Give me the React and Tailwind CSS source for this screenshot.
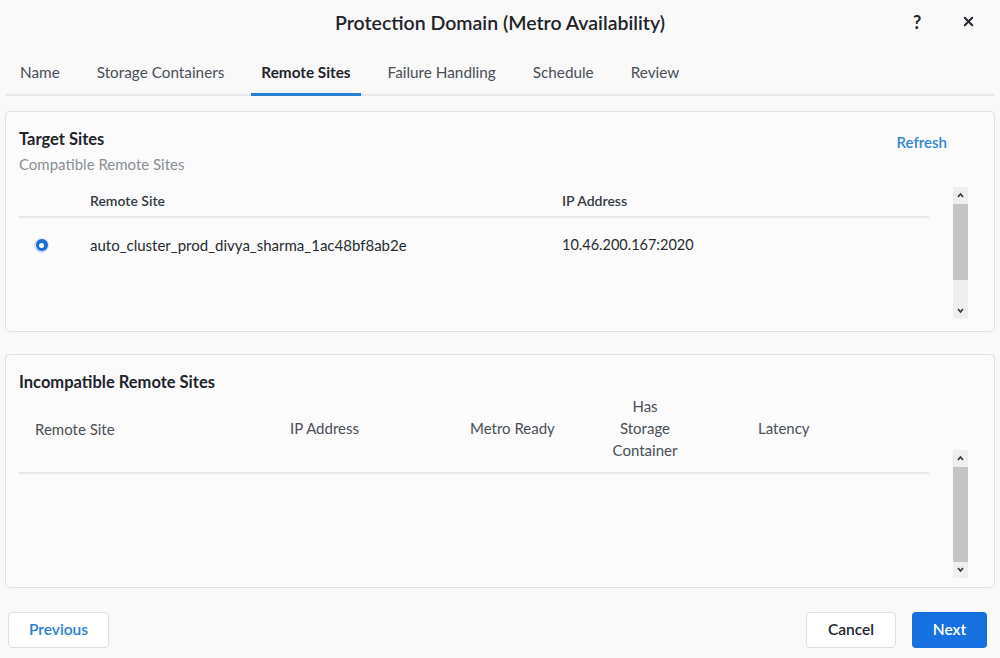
import { X } from "lucide-react";

const tabs = [
  "Name",
  "Storage Containers",
  "Remote Sites",
  "Failure Handling",
  "Schedule",
  "Review",
];

function Scrollbar({ className, thumbClass }) {
  return (
    <div className={`flex w-[15px] flex-col items-center bg-[#efefef] ${className}`}>
      <svg width="9" height="16" viewBox="0 0 9 16" className="shrink-0">
        <path d="M2 10 L4.5 7 L7 10" stroke="#333" strokeWidth="1.6" fill="none" />
      </svg>
      <div className={`w-full bg-[#c4c4c4] ${thumbClass}`} />
      <div className="flex-1" />
      <svg width="9" height="16" viewBox="0 0 9 16" className="shrink-0">
        <path d="M2 6 L4.5 9 L7 6" stroke="#333" strokeWidth="1.6" fill="none" />
      </svg>
    </div>
  );
}

export default function App() {
  return (
    <div
      className="flex h-[658px] w-[1000px] flex-col bg-[#f9f9f9] text-[#22272e]"
      style={{ fontFamily: "Lato, 'Noto Sans', sans-serif" }}
    >
      {/* header */}
      <div className="relative flex h-[46px] items-center justify-center">
        <h1 className="text-[19.5px] font-semibold text-[#1f242b]">
          Protection Domain (Metro Availability)
        </h1>
        <span className="absolute left-[913px] top-[9px] text-[18px] font-bold">?</span>
        <X className="absolute left-[961px] top-[14px]" size={15} strokeWidth={3} />
      </div>

      {/* tabs */}
      <div className="mx-[5px] flex h-[50px] items-stretch gap-[17px] border-b-2 border-[#e6e8eb] pl-[5px]">
        {tabs.map((t) => (
          <div
            key={t}
            className={`-mb-[2px] flex items-center px-[10px] pt-[6px] text-[15.3px] ${
              t === "Remote Sites"
                ? "border-b-[3px] border-[#2a7ed6] font-bold text-[#1f242b]"
                : "border-b-[3px] border-transparent text-[#4a4f57]"
            }`}
          >
            {t}
          </div>
        ))}
      </div>

      {/* target sites */}
      <div className="mx-[5px] mt-[15px] flex h-[221px] flex-col rounded-[4px] border border-[#dfe1e4] bg-[#fbfbfb] pl-[13px] pr-[26px]">
        <div className="flex items-start justify-between pt-[16px]">
          <div>
            <div className="text-[16.5px] font-bold leading-[22px] text-[#1f242b]">Target Sites</div>
            <div className="mt-[4px] text-[15px] leading-[20px] text-[#8a8f96]">
              Compatible Remote Sites
            </div>
          </div>
          <button className="mr-[21px] mt-[3px] text-[15px] font-semibold text-[#2e86d6]">
            Refresh
          </button>
        </div>
        <div className="mt-[13px] flex flex-1 pb-[9px]">
          <div className="mr-[24px] flex-1">
            <div className="flex h-[31px] items-center border-b-2 border-[#e8e9eb] pb-[3px] text-[14px] font-semibold text-[#333a42]">
              <span className="ml-[71px] w-[472px]">Remote Site</span>
              <span>IP Address</span>
            </div>
            <div className="flex h-[54px] items-center text-[15px] text-[#262b31]">
              <span className="ml-[15px] flex h-[15px] w-[15px] items-center justify-center rounded-full bg-[#cfe2f6]">
                <span className="flex h-[12px] w-[12px] items-center justify-center rounded-full bg-[#1a6fd0]">
                  <span className="h-[5px] w-[5px] rounded-full bg-white" />
                </span>
              </span>
              <span className="ml-[41px] w-[472px]">auto_cluster_prod_divya_sharma_1ac48bf8ab2e</span>
              <span className="text-[14.5px]">10.46.200.167:2020</span>
            </div>
          </div>
          <Scrollbar className="h-[132px]" thumbClass="mt-[1px] h-[76px]" />
        </div>
      </div>

      {/* incompatible sites */}
      <div className="mx-[5px] mt-[22px] flex h-[234px] flex-col rounded-[4px] border border-[#dfe1e4] bg-[#fbfbfb] pl-[13px] pr-[26px]">
        <div className="pt-[16px] text-[16.5px] font-bold leading-[22px] text-[#1f242b]">
          Incompatible Remote Sites
        </div>
        <div className="flex flex-1 pb-[7px]">
          <div className="mr-[24px] flex-1">
            <div className="mt-[1px] grid h-[80px] grid-cols-[255px_180px_142px_146px_1fr] items-center border-b-2 border-[#e8e9eb] pb-[10px] pl-[16px] text-[15px] text-[#4a4f57]">
              <span className="pt-[2px]">Remote Site</span>
              <span>IP Address</span>
              <span>Metro Ready</span>
              <span className="w-[66px] text-center leading-[22px]">
                Has
                <br />
                Storage
                <br />
                Container
              </span>
              <span>Latency</span>
            </div>
          </div>
          <Scrollbar className="mt-[57px] h-[128px]" thumbClass="mt-[1px] h-[98px]" />
        </div>
      </div>

      {/* footer */}
      <div className="mx-[8px] mt-[24px] flex items-center">
        <button className="h-[36px] w-[101px] rounded-[4px] border border-[#dcdee2] bg-white text-[15.5px] font-semibold text-[#2a7ed6]">
          Previous
        </button>
        <div className="flex-1" />
        <button className="h-[36px] w-[90px] rounded-[4px] border border-[#dcdee2] bg-white text-[15.5px] font-semibold text-[#22272e]">
          Cancel
        </button>
        <button className="ml-[16px] mr-[5px] h-[36px] w-[75px] rounded-[4px] bg-[#1670df] text-[15.5px] font-semibold text-white">
          Next
        </button>
      </div>
    </div>
  );
}
